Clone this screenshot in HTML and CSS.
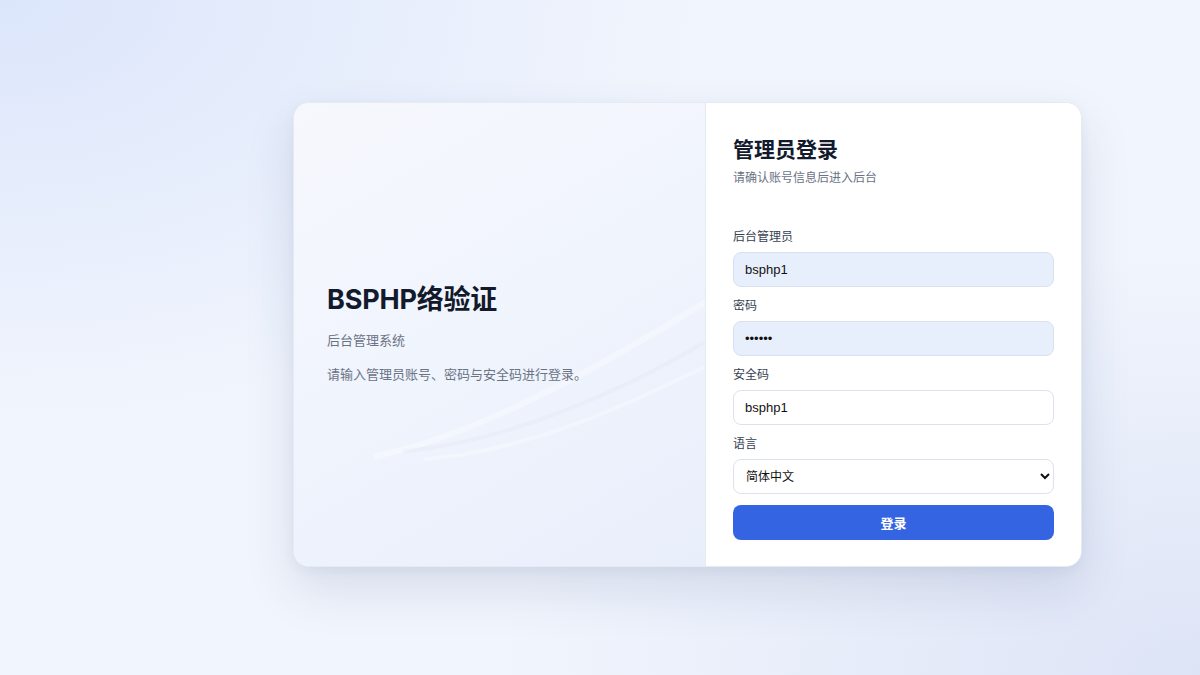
FILE: index.html
```html
<!DOCTYPE html>
<html lang="zh-CN">
<head>
<meta charset="utf-8">
<title>BSPHP络验证 - 管理员登录</title>
<link rel="stylesheet" href="styles.css">
</head>
<body>
<div class="page">
  <div class="card">
    <section class="intro">
      <svg class="waves" viewBox="0 0 413 465" preserveAspectRatio="none" aria-hidden="true">
        <path d="M80 355 C 180 335, 300 270, 413 200" fill="none" stroke="#ffffff" stroke-opacity="0.35" stroke-width="6"/>
        <path d="M110 350 C 210 340, 320 295, 413 240" fill="none" stroke="#dde3f1" stroke-opacity="0.25" stroke-width="4"/>
        <path d="M130 358 C 240 348, 330 305, 413 265" fill="none" stroke="#ffffff" stroke-opacity="0.3" stroke-width="4"/>
      </svg>
      <div class="intro-body">
        <h1 class="brand">BSPHP络验证</h1>
        <p class="brand-sub">后台管理系统</p>
        <p class="brand-desc">请输入管理员账号、密码与安全码进行登录。</p>
      </div>
    </section>
    <section class="login">
      <h2 class="login-title">管理员登录</h2>
      <p class="login-sub">请确认账号信息后进入后台</p>
      <form class="form">
        <div class="field">
          <label class="label" for="user">后台管理员</label>
          <input class="input filled" id="user" type="text" value="bsphp1">
        </div>
        <div class="field">
          <label class="label" for="pwd">密码</label>
          <input class="input filled" id="pwd" type="password" value="123456">
        </div>
        <div class="field">
          <label class="label" for="code">安全码</label>
          <input class="input" id="code" type="text" value="bsphp1">
        </div>
        <div class="field">
          <label class="label" for="lang">语言</label>
          <select class="input select" id="lang">
            <option>简体中文</option>
            <option>English</option>
          </select>
        </div>
        <button class="submit" type="button">登录</button>
      </form>
    </section>
  </div>
</div>
</body>
</html>
```

FILE: styles.css
```css
* { box-sizing: border-box; }

html, body {
  margin: 0;
  padding: 0;
  height: 100%;
}

body {
  font-family: "Inter", "Noto Sans CJK SC", "Noto Sans", sans-serif;
  color: #111827;
  background:
    radial-gradient(ellipse 700px 420px at 0% 0%, #dce6fb 0%, rgba(220,230,251,0) 100%),
    radial-gradient(ellipse 700px 420px at 100% 100%, #dde4f6 0%, rgba(221,228,246,0) 100%),
    #f1f5fd;
}

.page {
  height: 675px;
  display: flex;
  align-items: center;
  justify-content: center;
  padding-left: 175px;
  padding-bottom: 7px;
}

.card {
  width: 789px;
  height: 465px;
  display: flex;
  border-radius: 16px;
  overflow: hidden;
  background: #ffffff;
  border: 1px solid #e6eaf3;
  box-shadow: 0 22px 50px rgba(40, 60, 110, 0.13), 0 4px 12px rgba(40, 60, 110, 0.05);
}

.intro {
  position: relative;
  width: 412px;
  flex: none;
  display: flex;
  align-items: center;
  padding: 0 33px;
  background: linear-gradient(150deg, #f6f8fd 0%, #f0f4fd 50%, #e9eefb 100%);
  border-right: 1px solid #e6eaf2;
}

.waves {
  position: absolute;
  inset: 0;
  width: 100%;
  height: 100%;
}

.intro-body {
  position: relative;
  margin-top: -2px;
}

.brand {
  margin: 0;
  font-size: 27px;
  line-height: 36px;
  font-weight: 700;
  color: #121a2c;
  letter-spacing: -0.2px;
}

.brand-sub {
  margin: 12px 0 0;
  font-size: 13px;
  line-height: 20px;
  color: #6b7385;
}

.brand-desc {
  margin: 14px 0 0;
  font-size: 13px;
  line-height: 20px;
  color: #6b7385;
}

.login {
  flex: 1;
  padding: 32px 27px 26px 27px;
  background: #ffffff;
}

.login-title {
  margin: 0;
  font-size: 21px;
  line-height: 30px;
  font-weight: 700;
  color: #121a2c;
}

.login-sub {
  margin: 4px 0 0;
  font-size: 12px;
  line-height: 18px;
  color: #6b7385;
}

.form {
  margin-top: 41px;
  display: flex;
  flex-direction: column;
  gap: 10px;
}

.field {
  display: flex;
  flex-direction: column;
  gap: 6px;
}

.label {
  font-size: 12px;
  line-height: 18px;
  color: #374151;
}

.input {
  height: 35px;
  width: 100%;
  padding: 0 11px;
  border: 1px solid #dde2ec;
  border-radius: 8px;
  background: #ffffff;
  font-family: "Liberation Sans", Arial, sans-serif;
  font-size: 13px;
  color: #111111;
  outline: none;
}

.input.filled {
  background: #e8effc;
  border-color: #d9e1f1;
}

.select {
  padding: 0 8px;
  font-family: "Inter", "Noto Sans CJK SC", sans-serif;
  font-size: 12px;
}

.submit {
  margin-top: 1px;
  height: 35px;
  width: 100%;
  border: 0;
  border-radius: 8px;
  background: #3464e2;
  color: #ffffff;
  font-family: "Inter", "Noto Sans CJK SC", sans-serif;
  font-size: 13px;
  font-weight: 700;
}
```
